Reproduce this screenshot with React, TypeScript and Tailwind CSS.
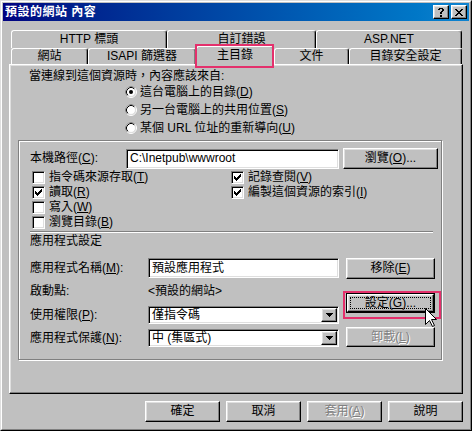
import React from "react";

const U = ({ c }: { c: string }) => (
  <span className="underline underline-offset-[1px] decoration-1">{c}</span>
);

const raised =
  "bg-[#c0c0c0] border border-t-white border-l-white border-r-black border-b-black shadow-[inset_-1px_-1px_0_#808080,inset_1px_1px_0_#dfdfdf]";
const sunken =
  "bg-white border border-t-[#808080] border-l-[#808080] border-r-white border-b-white shadow-[inset_1px_1px_0_#000,inset_-1px_-1px_0_#dfdfdf]";

function Btn({
  children,
  className = "",
  disabled = false,
}: {
  children: React.ReactNode;
  className?: string;
  disabled?: boolean;
}) {
  return (
    <div
      className={`flex items-center justify-center leading-[13px] ${raised} ${
        disabled ? "text-[#808080] [text-shadow:1px_1px_0_#fff]" : "text-black"
      } ${className}`}
    >
      {children}
    </div>
  );
}

function Radio({ checked = false }: { checked?: boolean }) {
  return (
    <svg width="12" height="12" viewBox="0 0 12 12" className="shrink-0">
      <circle cx="6" cy="6" r="5.5" fill="none" stroke="#fff" />
      <path d="M2.11 9.89 A5.5 5.5 0 0 1 9.89 2.11" fill="none" stroke="#808080" />
      <circle cx="6" cy="6" r="4.5" fill="#fff" stroke="#dfdfdf" />
      <path d="M2.82 9.18 A4.5 4.5 0 0 1 9.18 2.82" fill="none" stroke="#000" />
      {checked && <circle cx="6" cy="6" r="2" fill="#000" />}
    </svg>
  );
}

function Check({ checked = false }: { checked?: boolean }) {
  return (
    <div className={`w-[13px] h-[13px] shrink-0 flex items-center justify-center ${sunken}`}>
      {checked && (
        <svg width="7" height="7" viewBox="0 0 7 7" shapeRendering="crispEdges">
          <path
            d="M6 0h1v1h-1z M5 1h2v1h-2z M0 2h1v1h-1z M4 2h3v1h-3z M0 3h2v1h-2z M3 3h3v1h-3z M0 4h5v1h-5z M1 5h3v1h-3z M2 6h1v1h-1z"
            fill="#000"
          />
        </svg>
      )}
    </div>
  );
}

function Combo({ value }: { value: string }) {
  return (
    <div className={`w-[191px] h-[18px] p-px flex items-stretch ${sunken}`}>
      <div className="flex-1 flex items-center pl-[2px] leading-[13px]">{value}</div>
      <div className={`w-[16px] flex items-center justify-center ${raised}`}>
        <svg width="7" height="4" viewBox="0 0 7 4" shapeRendering="crispEdges">
          <path d="M0 0h7v1h-7z M1 1h5v1h-5z M2 2h3v1h-3z M3 3h1v1h-1z" fill="#000" />
        </svg>
      </div>
    </div>
  );
}

const tabBase =
  "flex items-center justify-center bg-[#c0c0c0] border-l border-t border-r border-l-white border-t-white border-r-black rounded-t-[3px] shadow-[inset_-1px_0_0_#808080] leading-[13px]";

export default function App() {
  return (
    <div className="w-[472px] h-[431px] bg-[#c0c0c0] border border-t-[#dfdfdf] border-l-[#dfdfdf] border-r-black border-b-black font-['Liberation_Sans','Noto_Sans_CJK_TC',sans-serif] text-[12px] text-black select-none">
      <div className="h-full border border-t-white border-l-white border-r-[#808080] border-b-[#808080] p-px flex flex-col">
        {/* Title bar */}
        <div className="h-[18px] shrink-0 flex items-center justify-between bg-gradient-to-r from-[#000080] to-[#1084d0] pl-[2px] pr-[2px]">
          <div className="text-white font-bold leading-[14px] tracking-[0.5px]">預設的網站 內容</div>
          <div className="flex gap-[2px]">
            <div className={`w-[16px] h-[14px] flex items-center justify-center ${raised}`}>
              <svg width="6" height="9" viewBox="0 0 6 9" shapeRendering="crispEdges">
                <path
                  d="M1 0h4v1h-4z M0 1h2v1h-2z M4 1h2v1h-2z M4 2h2v1h-2z M3 3h2v1h-2z M2 4h2v1h-2z M2 5h2v1h-2z M2 7h2v1h-2z M2 8h2v1h-2z"
                  fill="#000"
                />
              </svg>
            </div>
            <div className={`w-[16px] h-[14px] flex items-center justify-center ${raised}`}>
              <svg width="8" height="7" viewBox="0 0 8 7" shapeRendering="crispEdges">
                <path
                  d="M0 0h2v1h-2z M6 0h2v1h-2z M1 1h2v1h-2z M5 1h2v1h-2z M2 2h4v1h-4z M3 3h2v1h-2z M2 4h4v1h-4z M1 5h2v1h-2z M5 5h2v1h-2z M0 6h2v1h-2z M6 6h2v1h-2z"
                  fill="#000"
                />
              </svg>
            </div>
          </div>
        </div>

        {/* Body */}
        <div className="flex-1 flex flex-col px-[6px] pt-[9px]">
          {/* back tab row */}
          <div className="h-[18px] flex pl-[2px]">
            <div className={`${tabBase} w-[156px]`}>HTTP 標頭</div>
            <div className={`${tabBase} w-[149px]`}>自訂錯誤</div>
            <div className={`${tabBase} w-[146px]`}>ASP.NET</div>
          </div>
          {/* front tab row */}
          <div className="h-[16px] flex items-end pl-[2px] relative z-10">
            <div className={`${tabBase} w-[77px] h-[16px]`}>網站</div>
            <div className={`${tabBase} w-[108px] h-[16px]`}>ISAPI 篩選器</div>
            <div className={`${tabBase} w-[78px] h-[20px] -mb-[2px] pb-[2px] relative`}>
              主目錄
              <div className="absolute -left-[2px] -top-[3px] w-[79px] h-[24px] border-2 border-[#e4306c]" />
            </div>
            <div className={`${tabBase} w-[75px] h-[16px]`}>文件</div>
            <div className={`${tabBase} w-[113px] h-[16px]`}>目錄安全設定</div>
          </div>

          {/* panel */}
          <div className="h-[330px] shrink-0 flex flex-col border border-t-white border-l-white border-r-black border-b-black shadow-[inset_-1px_-1px_0_#808080,inset_1px_1px_0_#dfdfdf]">
            <div className="mt-[5px] h-[13px] pl-[19px] flex items-center leading-[13px]">
              當連線到這個資源時，內容應該來自:
            </div>
            <div className="flex flex-col pl-[115px]">
              <div className="h-[18px] flex items-center gap-[3px] leading-[13px]">
                <Radio checked />
                <span>
                  這台電腦上的目錄(<U c="D" />)
                </span>
              </div>
              <div className="h-[18px] flex items-center gap-[3px] leading-[13px]">
                <Radio />
                <span>
                  另一台電腦上的共用位置(<U c="S" />)
                </span>
              </div>
              <div className="h-[18px] flex items-center gap-[3px] leading-[13px]">
                <Radio />
                <span>
                  某個 URL 位址的重新導向(<U c="U" />)
                </span>
              </div>
            </div>

            {/* group box */}
            <div className="mt-[3px] ml-[8px] w-[424px] h-[220px] flex flex-col border border-[#808080] shadow-[inset_1px_1px_0_#fff,1px_1px_0_#fff]">
              <div className="mt-[7px] h-[21px] flex items-center">
                <div className="w-[107px] pl-[11px] leading-[13px]">
                  本機路徑(<U c="C" />):
                </div>
                <div className={`w-[213px] h-[20px] p-px flex items-center ${sunken}`}>
                  <span className="pl-[2px] leading-[13px]">C:\Inetpub\wwwroot</span>
                </div>
                <Btn className="ml-[4px] w-[95px] h-[21px]">
                  瀏覽(<U c="O" />)...
                </Btn>
              </div>

              <div className="mt-px grid grid-cols-[199px_1fr] pl-[13px] leading-[13px]">
                <div className="h-[15px] flex items-center gap-[4px]">
                  <Check />
                  <span>
                    指令碼來源存取(<U c="T" />)
                  </span>
                </div>
                <div className="h-[15px] flex items-center gap-[4px]">
                  <Check checked />
                  <span>
                    記錄查閱(<U c="V" />)
                  </span>
                </div>
                <div className="h-[15px] flex items-center gap-[4px]">
                  <Check checked />
                  <span>
                    讀取(<U c="R" />)
                  </span>
                </div>
                <div className="h-[15px] flex items-center gap-[4px]">
                  <Check checked />
                  <span>
                    編製這個資源的索引(<U c="I" />)
                  </span>
                </div>
                <div className="h-[15px] flex items-center gap-[4px]">
                  <Check />
                  <span>
                    寫入(<U c="W" />)
                  </span>
                </div>
                <div />
                <div className="h-[15px] flex items-center gap-[4px]">
                  <Check />
                  <span>
                    瀏覽目錄(<U c="B" />)
                  </span>
                </div>
                <div />
              </div>

              <div className="mt-px ml-[11px] w-[403px] h-[2px] border-t border-t-[#808080] border-b border-b-white" />

              <div className="mt-px h-[14px] pl-[11px] flex items-center leading-[13px]">應用程式設定</div>

              <div className="mt-[10px] flex">
                <div className="flex flex-col">
                  <div className="h-[20px] flex items-center">
                    <div className="w-[129px] pl-[11px] leading-[13px]">
                      應用程式名稱(<U c="M" />):
                    </div>
                    <div className={`w-[191px] h-[20px] p-px flex items-center ${sunken}`}>
                      <span className="pl-[2px] leading-[13px]">預設應用程式</span>
                    </div>
                  </div>
                  <div className="mt-[5px] h-[16px] flex items-center leading-[13px]">
                    <div className="w-[129px] pl-[11px]">啟動點:</div>
                    <div>&lt;預設的網站&gt;</div>
                  </div>
                  <div className="mt-[7px] h-[18px] flex items-center">
                    <div className="w-[129px] pl-[11px] leading-[13px]">
                      使用權限(<U c="P" />):
                    </div>
                    <Combo value="僅指令碼" />
                  </div>
                  <div className="mt-[5px] h-[18px] flex items-center">
                    <div className="w-[129px] pl-[11px] leading-[13px]">
                      應用程式保護(<U c="N" />):
                    </div>
                    <Combo value="中 (集區式)" />
                  </div>
                </div>

                <div className="ml-[7px] flex flex-col">
                  <Btn className="w-[89px] h-[21px]">
                    移除(<U c="E" />)
                  </Btn>
                  <div className="mt-[14px] w-[89px] h-[20px] relative border border-black">
                    <Btn className="w-full h-full">
                      <div className="absolute left-[3px] top-[3px] right-[3px] bottom-[3px] border border-dotted border-black" />
                      設定(<U c="G" />)...
                    </Btn>
                    <div className="absolute -left-[4px] -top-[3px] w-[98px] h-[28px] border-2 border-[#e4306c]" />
                    <svg
                      className="absolute left-[78px] top-[14px] z-20"
                      width="13"
                      height="20"
                      viewBox="0 0 13 20"
                    >
                      <path
                        d="M0.5 0.5 L0.5 16.5 L4.5 12.5 L7.5 18.5 L9.5 17.5 L6.5 11.5 L11.5 11.5 Z"
                        fill="#fff"
                        stroke="#000"
                        strokeWidth="1"
                      />
                    </svg>
                  </div>
                  <Btn disabled className="mt-[14px] w-[89px] h-[20px]">
                    卸載(<U c="L" />)
                  </Btn>
                </div>
              </div>
            </div>
          </div>

          {/* bottom buttons */}
          <div className="mt-[7px] flex justify-end gap-[6px]">
            <Btn className="w-[75px] h-[21px]">確定</Btn>
            <Btn className="w-[75px] h-[21px]">取消</Btn>
            <Btn disabled className="w-[75px] h-[21px]">
              套用(<U c="A" />)
            </Btn>
            <Btn className="w-[75px] h-[21px]">說明</Btn>
          </div>
        </div>
      </div>
    </div>
  );
}
